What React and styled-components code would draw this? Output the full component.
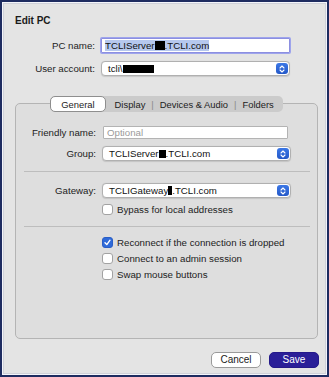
import React from 'react';
import styled, { createGlobalStyle } from 'styled-components';

const GlobalStyle = createGlobalStyle`
  html, body {
    margin: 0;
    padding: 0;
    background: #e4e4e4;
  }
  body {
    font-family: "Liberation Sans", Arial, sans-serif;
    font-size: 9.7px;
    color: #222;
  }
`;

const Window = styled.div`
  width: 329px;
  height: 377px;
  box-sizing: border-box;
  border: 2px solid #1e2c60;
  box-shadow: inset 0 0 0 1px #f4f5fa, inset 0 0 0 2px #cfd1d9;
  background: #e4e4e4;
  display: flex;
  flex-direction: column;
`;

const Title = styled.div`
  font-weight: bold;
  font-size: 10px;
  line-height: 14px;
  padding: 12px 0 0 13px;
  color: #1a1a1a;
`;

const FormGrid = styled.div`
  display: grid;
  grid-template-columns: 80px 189px;
  column-gap: 6px;
  row-gap: ${p => p.$gap || 8}px;
  align-items: center;
  margin: ${p => p.$top || 0}px 0 0 ${p => p.$left || 0}px;
`;

const Label = styled.label`
  text-align: right;
  white-space: nowrap;
  color: #222;
`;

const TextInput = styled.div`
  box-sizing: border-box;
  height: ${p => p.$h || 15}px;
  background: #fff;
  border: 1px solid ${p => (p.$focus ? '#8c8fe0' : '#b3b3b3')};
  box-shadow: ${p => (p.$focus ? '0 0 0 1px #9ea4ec' : 'none')};
  border-radius: 1px;
  display: flex;
  align-items: center;
  padding-left: 3px;
  line-height: 12px;
  color: ${p => (p.$placeholder ? '#9a9a9a' : '#111')};
`;

const Highlight = styled.span`
  background: #b6c8ee;
  display: inline-flex;
  align-items: center;
  height: 11px;
`;

const Redact = styled.span`
  display: inline-block;
  background: #000;
  width: ${p => p.$w}px;
  height: ${p => p.$h || 9}px;
  vertical-align: middle;
`;

const SelectBox = styled.div`
  box-sizing: border-box;
  height: 15px;
  background: #fff;
  border: 1px solid #b0b0b0;
  border-radius: 4px;
  display: flex;
  align-items: center;
  justify-content: space-between;
  padding: 0 1px 0 6px;
  color: #111;
  box-shadow: 0 0.5px 1px rgba(0, 0, 0, 0.12);
`;

const SelectValue = styled.span`
  display: inline-flex;
  align-items: center;
`;

const Stepper = styled.span`
  width: 12px;
  height: 11px;
  border-radius: 3px;
  background: linear-gradient(#3c78e6, #2458c8);
  display: flex;
  align-items: center;
  justify-content: center;
`;

const Panel = styled.div`
  box-sizing: border-box;
  margin: 27px 0 0 13px;
  width: 303px;
  height: 236px;
  border: 1px solid #b4b4b4;
  border-radius: 5px;
  background: #dedede;
  display: flex;
  flex-direction: column;
`;

const TabBar = styled.div`
  align-self: center;
  margin-top: -8px;
  height: 16px;
  box-sizing: border-box;
  background: #cbcbcb;
  border-radius: 5px;
  display: flex;
  align-items: center;
  padding-right: 9px;
`;

const Tab = styled.span`
  box-sizing: border-box;
  height: 16px;
  display: flex;
  align-items: center;
  padding: 0 ${p => (p.$active ? 10 : 0)}px;
  background: ${p => (p.$active ? '#fff' : 'transparent')};
  border: ${p => (p.$active ? '1px solid #8e8e8e' : 'none')};
  border-radius: 5px;
  margin-left: ${p => p.$ml || 0}px;
  color: #1c1c1c;
  font-size: 9.4px;
`;

const TabSep = styled.span`
  color: #8a8a8a;
  margin: 0 6px;
  font-size: 9.4px;
`;

const Separator = styled.div`
  height: 1px;
  background: #bdbdbd;
  margin: ${p => p.$top}px 7px 0 8px;
`;

const CheckRow = styled.div`
  display: flex;
  align-items: center;
  height: 12px;
  margin: ${p => p.$top || 0}px 0 0 86px;
  gap: 4px;
  color: #1c1c1c;
`;

const Box = styled.span`
  box-sizing: border-box;
  width: 11px;
  height: 11px;
  border-radius: 3px;
  background: ${p => (p.$checked ? '#2f6ad9' : '#fff')};
  border: 1px solid ${p => (p.$checked ? '#2a5ec6' : '#a2a2a2')};
  display: flex;
  align-items: center;
  justify-content: center;
`;

const Footer = styled.div`
  display: flex;
  justify-content: flex-end;
  gap: 8px;
  margin-top: 13px;
  padding-right: 8px;
`;

const Button = styled.button`
  box-sizing: border-box;
  width: 50px;
  height: 16px;
  border-radius: 5px;
  font-family: inherit;
  font-size: 10px;
  padding: 0;
  line-height: 14px;
  cursor: default;
  color: ${p => (p.$primary ? '#fff' : '#1a1a1a')};
  background: ${p => (p.$primary ? '#2a1f98' : '#fff')};
  border: 1px solid ${p => (p.$primary ? '#24198a' : '#9a9a9a')};
`;

const StepperIcon = () => (
  <Stepper>
    <svg width="6" height="8" viewBox="0 0 6 8" fill="none" stroke="#fff" strokeWidth="1.1" strokeLinecap="round" strokeLinejoin="round">
      <path d="M1 3 L3 1 L5 3" />
      <path d="M1 5 L3 7 L5 5" />
    </svg>
  </Stepper>
);

const Select = ({ children }) => (
  <SelectBox>
    <SelectValue>{children}</SelectValue>
    <StepperIcon />
  </SelectBox>
);

const Check = ({ checked, children, top }) => (
  <CheckRow $top={top}>
    <Box $checked={checked}>
      {checked && (
        <svg width="7" height="7" viewBox="0 0 7 7" fill="none" stroke="#fff" strokeWidth="1.4" strokeLinecap="round" strokeLinejoin="round">
          <path d="M1 3.8 L2.8 5.6 L6 1.2" />
        </svg>
      )}
    </Box>
    <span>{children}</span>
  </CheckRow>
);

export default function App() {
  return (
    <>
      <GlobalStyle />
      <Window>
        <Title>Edit PC</Title>
        <FormGrid $top={10} $left={13}>
          <Label>PC name:</Label>
          <TextInput $focus>
            <Highlight>
              TCLIServer<Redact $w={10} $h={9} />.TCLI.com
            </Highlight>
          </TextInput>
          <Label>User account:</Label>
          <Select>
            tcli\<Redact $w={31} $h={8} />
          </Select>
        </FormGrid>

        <Panel>
          <TabBar>
            <Tab $active>General</Tab>
            <Tab $ml={9}>Display</Tab>
            <TabSep>|</TabSep>
            <Tab>Devices &amp; Audio</Tab>
            <TabSep>|</TabSep>
            <Tab>Folders</Tab>
          </TabBar>

          <FormGrid $top={14} $left={0} $gap={7}>
            <Label>Friendly name:</Label>
            <TextInput $h={13} $placeholder style={{ marginLeft: 1, width: 185 }}>
              Optional
            </TextInput>
            <Label>Group:</Label>
            <Select>
              TCLIServer<Redact $w={7} $h={8} />.TCLI.com
            </Select>
          </FormGrid>

          <Separator $top={10} />

          <FormGrid $top={11} $left={0}>
            <Label>Gateway:</Label>
            <Select>
              TCLIGateway<Redact $w={4} $h={9} />.TCLI.com
            </Select>
          </FormGrid>
          <Check top={5}>Bypass for local addresses</Check>

          <Separator $top={11} />

          <Check checked top={9}>Reconnect if the connection is dropped</Check>
          <Check top={4}>Connect to an admin session</Check>
          <Check top={4}>Swap mouse buttons</Check>
        </Panel>

        <Footer>
          <Button>Cancel</Button>
          <Button $primary>Save</Button>
        </Footer>
      </Window>
    </>
  );
}
